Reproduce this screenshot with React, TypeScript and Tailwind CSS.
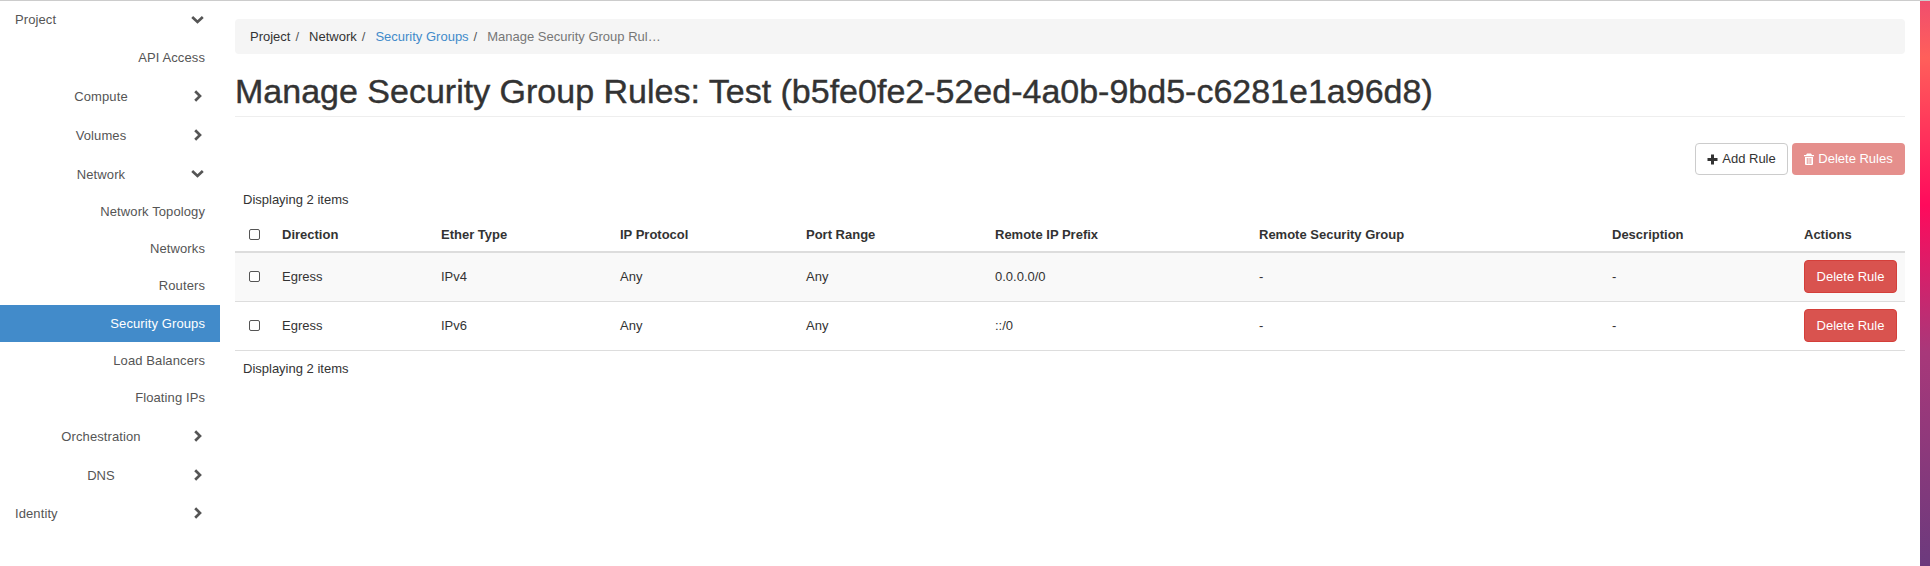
const font = "font-['Liberation_Sans',Arial,sans-serif]";

const ChevRight = () => (
  <svg viewBox="0 0 10 12" className="h-[12px] w-[10px]" fill="none" stroke="#555" strokeWidth="2.7">
    <path d="M2.2 1.2 L7 6 L2.2 10.8" />
  </svg>
);
const ChevDown = () => (
  <svg viewBox="0 0 13 10" className="h-[10px] w-[13px]" fill="none" stroke="#555" strokeWidth="2.7">
    <path d="M1.2 2 L6.5 7 L11.8 2" />
  </svg>
);
const PlusIcon = () => (
  <svg viewBox="0 0 11 11" className="h-[11px] w-[11px]" fill="#333">
    <path d="M4 0.5h3v3.5h3.5v3H7v3.5H4V7H0.5V4H4z" />
  </svg>
);
const TrashIcon = () => (
  <svg viewBox="0 0 10 12" className="h-[12px] w-[10px]" fill="#fff">
    <path d="M3 0.5h4l1 1.5h2v1.2H0V2h2z" />
    <path fillRule="evenodd" d="M1 4h8v7a1 1 0 0 1-1 1H2a1 1 0 0 1-1-1zM2.8 5v6h0.9V5zM4.6 5v6h0.9V5zM6.4 5v6h0.9V5z" />
  </svg>
);

function Top({ label, open, left }: { label: string; open?: boolean; left?: boolean }) {
  return (
    <div className="flex h-[38.8px] items-center pl-[15px] pr-[16px] tracking-[0.1px] text-[#555]">
      <span className={`${left ? "flex-1 text-left" : "mr-[4px] flex-1 text-center"} ${label === "Project" ? "" : "pt-[2px]"}`}>{label}</span>
      <span className="flex w-[13px] justify-center">{open ? <ChevDown /> : <ChevRight />}</span>
    </div>
  );
}

function Sub({ label, active }: { label: string; active?: boolean }) {
  return (
    <div className={`flex h-[37.2px] items-center justify-end pr-[15px] tracking-[0.1px] ${active ? "bg-[#428bca] text-white" : "text-[#555]"}`}>
      {label}
    </div>
  );
}

const Box = () => <span className="block h-[11px] w-[11px] rounded-[2px] border border-[#555] bg-white" />;

const DelRule = () => (
  <button className="flex h-[33px] w-[93px] items-center justify-center rounded-[4px] border border-[#d43f3a] bg-[#d9534f] text-white">
    Delete Rule
  </button>
);

const rows = [
  ["Egress", "IPv4", "Any", "Any", "0.0.0.0/0", "-", "-"],
  ["Egress", "IPv6", "Any", "Any", "::/0", "-", "-"],
];
const heads = ["Direction", "Ether Type", "IP Protocol", "Port Range", "Remote IP Prefix", "Remote Security Group", "Description", "Actions"];
const widths = ["w-[159px]", "w-[179px]", "w-[186px]", "w-[189px]", "w-[264px]", "w-[353px]", "w-[192px]", "w-[101px]"];

export default function App() {
  return (
    <div className={`${font} flex h-[566px] w-[1930px] overflow-hidden border-t border-[#ccc] bg-white text-[13px] leading-[18px] text-[#333]`}>
      <aside className="w-[220px] shrink-0">
        <Top label="Project" open left />
        <Sub label="API Access" />
        <Top label="Compute" />
        <Top label="Volumes" />
        <Top label="Network" open />
        <Sub label="Network Topology" />
        <Sub label="Networks" />
        <Sub label="Routers" />
        <Sub label="Security Groups" active />
        <Sub label="Load Balancers" />
        <Sub label="Floating IPs" />
        <Top label="Orchestration" />
        <Top label="DNS" />
        <Top label="Identity" left />
      </aside>
      <main className="w-[1670px] shrink-0 ml-[15px] pt-[18px]">
        <nav className="flex h-[35px] items-center rounded-[4px] bg-[#f5f5f5] pl-[15px]">
          <span>Project</span>
          <span className="pl-[5px] pr-[10px] text-[#555]">/</span>
          <span>Network</span>
          <span className="pl-[5px] pr-[10px] text-[#555]">/</span>
          <span className="text-[#428bca]">Security Groups</span>
          <span className="pl-[5px] pr-[10px] text-[#555]">/</span>
          <span className="text-[#777]">Manage Security Group Rul…</span>
        </nav>
        <h1 className="mt-[20px] h-[42px] text-[34px] leading-[35px] font-normal text-[#333] [-webkit-text-stroke:0.4px_#333]">
          Manage Security Group Rules: Test (b5fe0fe2-52ed-4a0b-9bd5-c6281e1a96d8)
        </h1>
        <div className="h-px bg-[#eee]" />
        <div className="mt-[26px] flex justify-end gap-[4px]">
          <button className="flex h-[32px] w-[93px] items-center justify-center gap-[4px] rounded-[4px] border border-[#ccc] bg-white text-[#333]">
            <PlusIcon /> Add Rule
          </button>
          <button className="flex h-[32px] w-[113px] items-center justify-center gap-[4px] rounded-[4px] bg-[#e58f8c] text-white">
            <TrashIcon /> Delete Rules
          </button>
        </div>
        <div className="mt-[16px] h-[18px] pl-[8px]">Displaying 2 items</div>
        <table className="mt-[9px] w-[1670px] table-fixed border-collapse">
          <thead>
            <tr className="h-[34px] border-b-2 border-[#ddd]">
              <th className="w-[47px] pl-[14px] text-left"><Box /></th>
              {heads.map((h, i) => (
                <th key={h} className={`${widths[i]} text-left font-bold`}>{h}</th>
              ))}
            </tr>
          </thead>
          <tbody>
            {rows.map((r, i) => (
              <tr key={i} className={`h-[49px] border-b border-[#ddd] ${i === 0 ? "bg-[#f9f9f9]" : ""}`}>
                <td className="pl-[14px]"><Box /></td>
                {r.map((c, j) => <td key={j}>{c}</td>)}
                <td><DelRule /></td>
              </tr>
            ))}
          </tbody>
        </table>
        <div className="mt-[9px] pl-[8px]">Displaying 2 items</div>
      </main>
      <div className="ml-[15px] h-[566px] w-[10px] shrink-0 bg-[linear-gradient(180deg,#f04e6e_0%,#ff5f5a_10%,#ff0a5c_36%,#a8387a_62%,#6b3a7d_100%)]" />
    </div>
  );
}
